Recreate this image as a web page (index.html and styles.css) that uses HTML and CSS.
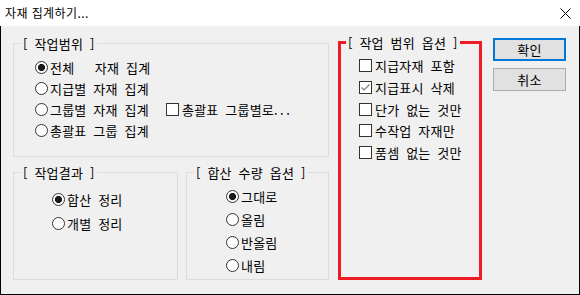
FILE: index.html
```html
<!DOCTYPE html>
<html lang="ko">
<head>
<meta charset="utf-8">
<title>자재 집계하기...</title>
<link rel="stylesheet" href="styles.css">
</head>
<body>
<div class="titlebar">
  <span class="title">자재 집계하기...</span>
  <svg class="close" width="11" height="11" viewBox="0 0 11 11"><path d="M0.5 0.5L10.5 10.5M10.5 0.5L0.5 10.5" stroke="#000" stroke-width="1" fill="none"/></svg>
</div>
<div class="dialog">
  <div class="left">
    <fieldset class="group g1">
      <legend>[ 작업범위 ]</legend>
      <div class="opts opts1">
        <div class="opt"><span class="radio on"></span>전체   자재 집계</div>
        <div class="opt"><span class="radio"></span>지급별 자재 집계</div>
        <div class="optrow">
          <div class="opt wide"><span class="radio"></span>그룹별 자재 집계</div>
          <div class="opt"><span class="check"></span>총괄표 그룹별로<span class="dots">...</span></div>
        </div>
        <div class="opt"><span class="radio"></span>총괄표 그룹 집계</div>
      </div>
    </fieldset>
    <div class="lower">
      <fieldset class="group g2">
        <legend>[ 작업결과 ]</legend>
        <div class="opts opts2">
          <div class="opt"><span class="radio on"></span>합산 정리</div>
          <div class="opt"><span class="radio"></span>개별 정리</div>
        </div>
      </fieldset>
      <fieldset class="group g3">
        <legend>[ 합산 수량 옵션 ]</legend>
        <div class="opts opts3">
          <div class="opt"><span class="radio on"></span>그대로</div>
          <div class="opt"><span class="radio"></span>올림</div>
          <div class="opt"><span class="radio"></span>반올림</div>
          <div class="opt"><span class="radio"></span>내림</div>
        </div>
      </fieldset>
    </div>
  </div>
  <fieldset class="redbox">
    <legend>[ 작업 범위 옵션 ]</legend>
    <div class="opts opts4">
      <div class="opt"><span class="check"></span>지급자재 포함</div>
      <div class="opt"><span class="check on"><svg width="11" height="11" viewBox="0 0 11 11"><path d="M1.5 5.5L4 8L9.5 2.5" stroke="#7a7a7a" stroke-width="1.2" fill="none"/></svg></span>지급표시 삭제</div>
      <div class="opt"><span class="check"></span>단가 없는 것만</div>
      <div class="opt"><span class="check"></span>수작업 자재만</div>
      <div class="opt"><span class="check"></span>품셈 없는 것만</div>
    </div>
  </fieldset>
  <div class="buttons">
    <div class="btn default">확인</div>
    <div class="btn">취소</div>
  </div>
</div>
</body>
</html>
```
FILE: styles.css
```css
* { box-sizing: border-box; }
html, body { margin: 0; padding: 0; }
body {
  width: 580px;
  height: 295px;
  overflow: hidden;
  background: #fff;
  color: #000;
  font-family: "Noto Sans CJK KR", "Noto Sans", sans-serif;
  font-size: 12px;
}
.titlebar {
  height: 26px;
  display: flex;
  align-items: center;
  justify-content: space-between;
  padding: 0 9px 0 5px;
  background: #fff;
}
.title { line-height: 26px; letter-spacing: 0.4px; }
.close { display: block; }
.dialog {
  height: 269px;
  background: #f0f0f0;
  border: 1px solid #000;
  border-top: 0;
  display: flex;
  align-items: flex-start;
  padding-left: 12px;
  font-size: 13px;
  word-spacing: 3px;
  letter-spacing: 0.2px;
}
.dots { letter-spacing: 2.5px; }
.left {
  width: 316px;
  margin-top: 10px;
  display: flex;
  flex-direction: column;
}
.group {
  margin: 0;
  padding: 0;
  min-width: 0;
  border: 1px solid #dcdcdc;
}
.group legend, .redbox legend {
  margin-left: 7px;
  padding: 0 2px;
  height: 15px;
  line-height: 15px;
}
.g1 { height: 121px; }
.lower { display: flex; gap: 8px; margin-top: 8px; }
.g2 { width: 165px; height: 115px; }
.g3 { width: 143px; height: 115px; }
.opts { display: flex; flex-direction: column; }
.opts1 { padding: 6px 0 0 21px; }
.opts2 { padding: 7px 0 0 38px; }
.opts2 .opt { height: 24px; }
.opts3 { padding: 5px 0 0 39px; }
.opts3 .opt { height: 23px; }
.opts4 { padding: 5px 0 0 18px; }
.opts4 .opt { height: 21.7px; }
.opt {
  display: flex;
  align-items: center;
  height: 21px;
  white-space: pre;
  line-height: 15px;
}
.optrow { display: flex; }
.wide { width: 131px; }
.radio {
  width: 13px;
  height: 13px;
  flex: none;
  border: 1px solid #333;
  border-radius: 50%;
  background: #fff;
  margin-right: 2px;
}
.radio.on {
  background: radial-gradient(circle, #1a1a1a 0 3.2px, #fff 3.9px);
}
.check {
  width: 13px;
  height: 13px;
  flex: none;
  border: 1px solid #333;
  background: #fff;
  margin-right: 3px;
  display: flex;
}
.check svg { display: block; }
.redbox {
  margin: 9px 0 0 9px;
  padding: 0;
  min-width: 0;
  width: 144px;
  height: 245px;
  border: 3px solid #ed1c24;
}
.redbox legend { margin-left: 5px; }
.buttons {
  margin: 12px 0 0 11px;
  display: flex;
  flex-direction: column;
  gap: 7px;
}
.btn {
  width: 73px;
  height: 23px;
  background: #e1e1e1;
  border: 1px solid #adadad;
  display: flex;
  align-items: center;
  justify-content: center;
  line-height: 15px;
}
.btn.default { border: 2px solid #0078d7; }
```
